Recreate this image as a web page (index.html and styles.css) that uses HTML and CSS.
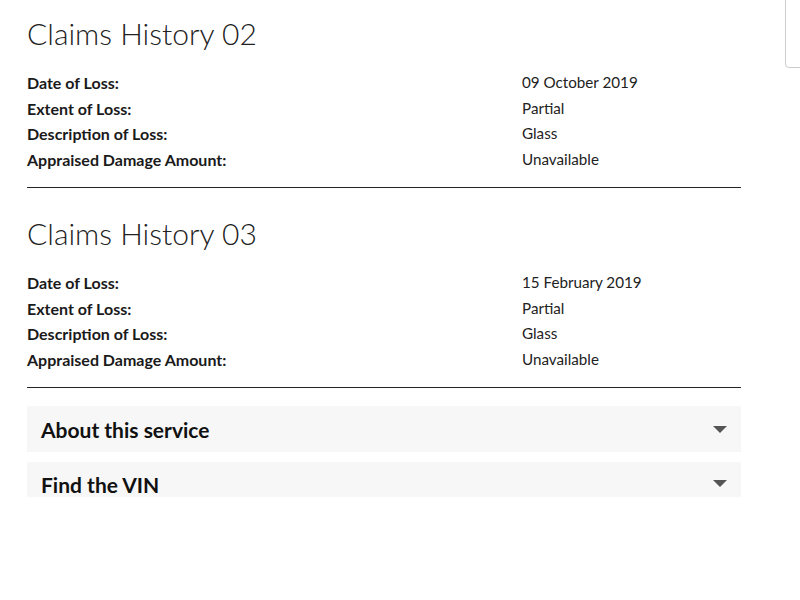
FILE: index.html
```html
<!DOCTYPE html>
<html>
<head>
<meta charset="utf-8">
<link rel="stylesheet" href="styles.css">
</head>
<body>
<div class="scroll-thumb"></div>
<main class="page">
  <section class="claim">
    <h2 class="claim-title">Claims History 02</h2>
    <div class="rows">
      <div class="label">Date of Loss:</div><div class="value">09 October 2019</div>
      <div class="label">Extent of Loss:</div><div class="value">Partial</div>
      <div class="label">Description of Loss:</div><div class="value">Glass</div>
      <div class="label">Appraised Damage Amount:</div><div class="value">Unavailable</div>
    </div>
  </section>
  <section class="claim">
    <h2 class="claim-title">Claims History 03</h2>
    <div class="rows">
      <div class="label">Date of Loss:</div><div class="value">15 February 2019</div>
      <div class="label">Extent of Loss:</div><div class="value">Partial</div>
      <div class="label">Description of Loss:</div><div class="value">Glass</div>
      <div class="label">Appraised Damage Amount:</div><div class="value">Unavailable</div>
    </div>
  </section>
  <div class="accordion">
    <div class="acc-item"><span class="acc-title">About this service</span><span class="caret"></span></div>
    <div class="acc-item acc-cut"><span class="acc-title">Find the VIN</span><span class="caret"></span></div>
  </div>
</main>
</body>
</html>
```
FILE: styles.css
```css
html, body {
  margin: 0;
  padding: 0;
  background: #fff;
}
body {
  font-family: Lato, "Liberation Sans", sans-serif;
  color: #1a1a1a;
}
.page {
  width: 714px;
  margin-left: 27px;
  padding-top: 15px;
}
.claim {
  border-bottom: 1px solid #222;
  padding-bottom: 15px;
  margin-bottom: 27px;
}
.claim-title {
  margin: 0 0 19px 0;
  font-weight: 300;
  font-size: 30px;
  line-height: 36px;
  color: #222;
}
.rows {
  display: grid;
  grid-template-columns: 495px 1fr;
  row-gap: 0;
}
.label {
  font-weight: 700;
  font-size: 16px;
  line-height: 25.5px;
}
.value {
  font-size: 15.2px;
  line-height: 25.5px;
  color: #222;
}
.accordion {
  display: flex;
  flex-direction: column;
  gap: 10px;
  margin-top: -9px;
}
.acc-item {
  background: #f7f7f7;
  height: 46px;
  display: flex;
  align-items: center;
  justify-content: space-between;
  padding: 0 14px;
}
.acc-cut {
  height: 35px;
  align-items: flex-end;
  overflow: hidden;
}
.acc-cut .acc-title {
  line-height: 46px;
  height: 35px;
  margin-top: 11px;
}
.acc-cut .caret {
  margin-bottom: 10px;
}
.acc-title {
  font-weight: 700;
  font-size: 21px;
  color: #111;
}
.caret {
  width: 0;
  height: 0;
  border-left: 7px solid transparent;
  border-right: 7px solid transparent;
  border-top: 7px solid #555;
}
.scroll-thumb {
  position: fixed;
  top: -4px;
  left: 785px;
  width: 20px;
  height: 72px;
  border: 1px solid #ccc;
  border-radius: 4px;
  box-sizing: border-box;
}
```
